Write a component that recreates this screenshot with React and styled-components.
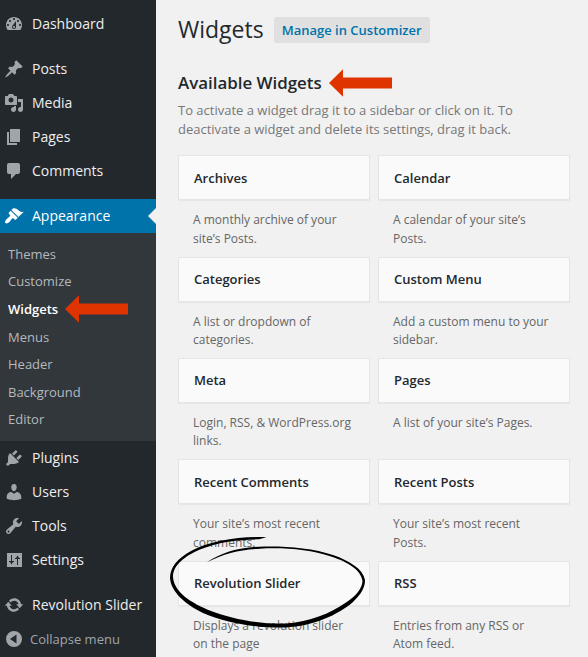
import React from "react";
import styled, { createGlobalStyle, css } from "styled-components";

const Global = createGlobalStyle`
  * { box-sizing: border-box; }
  body {
    margin: 0;
    background: #f1f1f1;
    font-family: "Open Sans", sans-serif;
    overflow: hidden;
  }
  h1, h2, h3, p { margin: 0; }
`;

const Page = styled.div`
  display: flex;
  width: 588px;
  height: 657px;
  overflow: hidden;
`;

const Sidebar = styled.nav`
  flex: none;
  width: 156px;
  padding-top: 7px;
  background: #23282d;
`;

const MenuItem = styled.a`
  position: relative;
  display: flex;
  align-items: center;
  gap: 8px;
  height: 34px;
  padding-left: 4px;
  margin-top: ${(p) => (p.$gap ? "11px" : "0")};
  font-size: 14px;
  line-height: 18px;
  white-space: nowrap;
  color: #eee;
  ${(p) =>
    p.$active &&
    css`
      background: #0073aa;
      color: #fff;
      &::after {
        content: "";
        position: absolute;
        right: 0;
        top: 9px;
        border: 8px solid transparent;
        border-left: 0;
        border-right-color: #f1f1f1;
      }
    `}
`;

const MenuIcon = styled.svg`
  flex: none;
  width: 20px;
  height: 20px;
  fill: ${(p) => (p.$active ? "#fff" : "#a0a5aa")};
  fill-rule: evenodd;
`;

const Submenu = styled.div`
  display: flex;
  flex-direction: column;
  height: 208px;
  padding: 7px 0 8px 8px;
  background: #32373c;
`;

const SubItem = styled.a`
  display: flex;
  align-items: center;
  flex: 1;
  gap: 7px;
  font-size: 13px;
  line-height: 18px;
  color: ${(p) => (p.$current ? "#fff" : "#b4b9be")};
  font-weight: ${(p) => (p.$current ? 600 : 400)};
`;

const Collapse = styled.button`
  display: flex;
  align-items: center;
  gap: 6px;
  height: 34px;
  padding: 0 0 0 4px;
  border: 0;
  background: none;
  font: 13px "Open Sans", sans-serif;
  color: #a0a5aa;
`;

const Main = styled.main`
  flex: 1;
  padding: 12px 18px 0 22px;
`;

const TitleRow = styled.header`
  display: flex;
  align-items: center;
  gap: 10px;
  height: 34px;
`;

const Title = styled.h1`
  font-size: 23px;
  font-weight: 400;
  line-height: 32px;
  color: #23282d;
`;

const CustomizerButton = styled.a`
  margin-top: 2px;
  padding: 0 8px;
  height: 26px;
  line-height: 26px;
  border-radius: 2px;
  background: #e0e0e0;
  color: #0073aa;
  font-size: 13px;
  font-weight: 600;
  white-space: nowrap;
`;

const SectionTitle = styled.div`
  display: flex;
  align-items: center;
  gap: 7px;
  height: 28px;
  margin-top: 23px;
`;

const SectionHeading = styled.h2`
  font-size: 16.9px;
  font-weight: 600;
  line-height: 24px;
  color: #23282d;
`;

const Intro = styled.p`
  margin-top: 4px;
  font-size: 13px;
  line-height: 19px;
  color: #777;
  white-space: nowrap;
`;

const Grid = styled.div`
  display: grid;
  grid-template-columns: 192px 192px;
  column-gap: 8px;
  grid-auto-rows: 101.4px;
  margin-top: 16.2px;
`;

const Widget = styled.section`
  position: relative;
`;

const Card = styled.div`
  display: flex;
  align-items: center;
  height: 45px;
  padding: 0 15px;
  border: 1px solid #e5e5e5;
  background: #fafafa;
  box-shadow: 0 1px 1px rgba(0, 0, 0, 0.04);
`;

const CardTitle = styled.h3`
  font-size: 13px;
  font-weight: 600;
  line-height: 18px;
  color: #23282d;
`;

const Description = styled.p`
  padding: 11px 0 0 15px;
  font-size: 12px;
  line-height: 18.5px;
  color: #666;
  white-space: pre-line;
`;

const Scribble = styled.svg`
  position: absolute;
  left: -12px;
  top: -28px;
  width: 204px;
  height: 100px;
`;

const PointerSvg = styled.svg`
  flex: none;
  width: 63px;
  height: 28px;
  fill: #e03400;
`;

const Pointer = () => (
  <PointerSvg viewBox="0 0 63 28">
    <path d="M0 14 14 .3V8.500H63V19.500H14V27.700Z" />
  </PointerSvg>
);

const icons = {
  dashboard:
    "M3.76 16h12.48c1.1-1.37 1.76-3.11 1.76-5 0-4.42-3.58-8-8-8s-8 3.58-8 8c0 1.89.66 3.63 1.76 5zM10 4c.55 0 1 .45 1 1s-.45 1-1 1-1-.45-1-1 .45-1 1-1zM6 6c.55 0 1 .45 1 1s-.45 1-1 1-1-.45-1-1 .45-1 1-1zm8 0c.55 0 1 .45 1 1s-.45 1-1 1-1-.45-1-1 .45-1 1-1zm-5.370 5.550L12 7v6c0 1.100-.9 2-2 2s-2-.9-2-2c0-.57.24-1.080.63-1.450zM4 10c.55 0 1 .45 1 1s-.45 1-1 1-1-.45-1-1 .45-1 1-1zm12 0c.55 0 1 .45 1 1s-.45 1-1 1-1-.45-1-1 .45-1 1-1zm-5 3c0-.55-.45-1-1-1s-1 .45-1 1 .45 1 1 1 1-.45 1-1z",
  post: "M10.44 3.02l1.820-1.820 6.360 6.350-1.830 1.820c-1.050-.68-2.480-.57-3.410.36l-.75.75c-.92.93-1.040 2.350-.35 3.410l-1.830 1.820-2.410-2.410-2.800 2.790c-.42.42-3.380 2.710-3.800 2.290s1.860-3.390 2.280-3.810l2.790-2.790L4.100 9.360l1.830-1.820c1.050.69 2.480.57 3.400-.36l.75-.75c.93-.92 1.050-2.350.36-3.410z",
  media:
    "M13 11V4c0-.55-.45-1-1-1h-1.670L9 1H5L3.670 3H2c-.55 0-1 .45-1 1v7c0 .55.45 1 1 1h10c.55 0 1-.45 1-1zM7 4.500c1.380 0 2.500 1.120 2.500 2.500S8.380 9.500 7 9.500 4.500 8.380 4.500 7 5.620 4.500 7 4.500zM14 6h5v10.500c0 1.380-1.120 2.500-2.500 2.500S14 17.880 14 16.500s1.120-2.500 2.500-2.500c.17 0 .34.02.5.05V9h-3V6zm-4 8.050V13h2v3.500c0 1.380-1.120 2.500-2.500 2.500S7 17.880 7 16.500 8.120 14 9.500 14c.17 0 .34.02.5.05z",
  page: "M6 15V2h10v13H6zm-1 1h8v2H3V5h2v11z",
  comments:
    "M5 2h9c1.100 0 2 .9 2 2v7c0 1.100-.9 2-2 2h-2l-5 5v-5H5c-1.100 0-2-.9-2-2V4c0-1.100.9-2 2-2z",
  appearance:
    "M14.480 11.060L7.410 3.990l1.500-1.500c.5-.56 2.300-.47 3.510.32 1.210.8 1.430 1.280 2.910 2.100 1.180.64 2.450 1.260 4.450.85zm-.71.71L6.700 4.700 4.930 6.470c-.39.39-.39 1.020 0 1.410l1.060 1.060c.39.39.39 1.030 0 1.420-.6.6-1.430 1.110-2.210 1.690-.35.26-.7.53-1.010.84C1.430 14.230.4 16.080 1.400 17.070c.99 1 2.840-.03 4.180-1.360.31-.31.58-.66.85-1.020.57-.78 1.080-1.610 1.690-2.210.39-.39 1.020-.39 1.410 0l1.060 1.060c.39.39 1.020.39 1.410 0z",
  plugins:
    "M13.110 4.360L9.870 7.600 8 5.730l3.240-3.240c.35-.34 1.050-.2 1.560.32.52.51.66 1.210.31 1.550zm-8 1.770l.91-1.120 9.010 9.010-1.190.84c-.71.71-2.630 1.160-3.820 1.160H6.140L4.900 17.260c-.59.59-1.540.59-2.120 0-.59-.58-.59-1.530 0-2.120l1.240-1.240v-3.880c0-1.130.4-3.190 1.090-3.890zm7.260 3.970l3.240-3.240c.34-.35 1.040-.21 1.550.31.52.51.66 1.210.31 1.550l-3.240 3.250z",
  users:
    "M10 9.250c-2.270 0-2.730-3.440-2.730-3.440C7 4.020 7.820 2 9.970 2c2.160 0 2.980 2.020 2.710 3.810 0 0-.41 3.440-2.680 3.440zm0 2.570L12.720 10c2.390 0 4.520 2.330 4.520 4.530v2.490s-3.650 1.130-7.240 1.130c-3.650 0-7.240-1.130-7.240-1.130v-2.490c0-2.250 1.940-4.480 4.470-4.480z",
  tools:
    "M16.680 9.770c-1.340 1.340-3.300 1.670-4.950.99l-5.410 6.520c-.99.99-2.590.99-3.580 0s-.99-2.590 0-3.570l6.520-5.420c-.68-1.650-.35-3.610.99-4.950 1.280-1.280 3.120-1.620 4.720-1.060l-2.890 2.890 2.820 2.820 2.860-2.870c.53 1.580.18 3.390-1.080 4.650zM3.810 16.210c.4.39 1.040.39 1.430 0 .4-.4.4-1.040 0-1.430-.39-.4-1.030-.4-1.430 0-.39.39-.39 1.030 0 1.430z",
  settings:
    "M3 3H18V17H3ZM7 5V11H5V12H6L7.500 14.500 9 12H10V11H8V5ZM13 15V9H11V8H12L13.500 5.500 15 8H16V9H14V15Z",
  update:
    "M10.200 3.280c3.530 0 6.430 2.610 6.920 6h2.080l-3.500 4-3.500-4h2.320c-.45-1.970-2.210-3.450-4.320-3.450-1.450 0-2.730.71-3.540 1.780L4.950 5.660C6.230 4.200 8.110 3.280 10.200 3.280zm-.4 13.440c-3.520 0-6.430-2.610-6.920-6H.8l3.500-4c1.170 1.330 2.330 2.670 3.500 4H5.480c.45 1.970 2.210 3.450 4.320 3.450 1.450 0 2.730-.71 3.540-1.780l1.710 1.950c-1.280 1.460-3.150 2.380-5.250 2.380z",
  collapse: "M10 2A8 8 0 1 0 10 18A8 8 0 1 0 10 2ZM12.500 5.500V14.500L6 10Z",
};

const Icon = ({ name, active }) => (
  <MenuIcon viewBox="0 0 20 20" $active={active}>
    <path d={icons[name]} />
  </MenuIcon>
);

const topMenu = [
  ["dashboard", "Dashboard"],
  ["post", "Posts", true],
  ["media", "Media"],
  ["page", "Pages"],
  ["comments", "Comments"],
];
const subMenu = ["Themes", "Customize", "Widgets", "Menus", "Header", "Background", "Editor"];
const bottomMenu = [
  ["plugins", "Plugins"],
  ["users", "Users"],
  ["tools", "Tools"],
  ["settings", "Settings"],
  ["update", "Revolution Slider", true],
];

const widgets = [
  ["Archives", "A monthly archive of your\nsite’s Posts."],
  ["Calendar", "A calendar of your site’s\nPosts."],
  ["Categories", "A list or dropdown of\ncategories."],
  ["Custom Menu", "Add a custom menu to your\nsidebar."],
  ["Meta", "Login, RSS, & WordPress.org\nlinks."],
  ["Pages", "A list of your site’s Pages."],
  ["Recent Comments", "Your site’s most recent\ncomments."],
  ["Recent Posts", "Your site’s most recent\nPosts."],
  ["Revolution Slider", "Displays a revolution slider\non the page", true],
  ["RSS", "Entries from any RSS or\nAtom feed."],
];

const MenuGroup = ({ items }) =>
  items.map(([icon, label, gap]) => (
    <MenuItem key={label} $gap={gap}>
      <Icon name={icon} />
      {label}
    </MenuItem>
  ));

const HandDrawnCircle = () => (
  <Scribble viewBox="166 533 204 100">
    <path d="M266.500 537.300C240 536 210 541 191 551C178 558 170 567 170 578C171 592 185 604 203 613C228 624 258 628 286 627.500C313 626 338 615 353 602C361 594 365 588 365 580C363 569 350 561 333 555C313 548 286 546 264 546.500C241 547 222 552 207 562.300C224 553.500 240 549.500 260 548.700C285 547.500 310 549.500 331 556.500C348 562 361 570 362.500 581C362 589 356 596 346 602.500C330 614 309 621.500 287 623.500C260 624.500 232 619 211 611C191 603 174 592 173 577C173 565 185 556 200 549.500C220 541 240 539.800 259 539.300Z" />
  </Scribble>
);

export default function App() {
  return (
    <>
      <Global />
      <Page>
        <Sidebar>
          <MenuGroup items={topMenu} />
          <MenuItem $gap $active>
            <Icon name="appearance" active />
            Appearance
          </MenuItem>
          <Submenu>
            {subMenu.map((label) => (
              <SubItem key={label} $current={label === "Widgets"}>
                {label}
                {label === "Widgets" && <Pointer />}
              </SubItem>
            ))}
          </Submenu>
          <MenuGroup items={bottomMenu} />
          <Collapse>
            <Icon name="collapse" />
            Collapse menu
          </Collapse>
        </Sidebar>
        <Main>
          <TitleRow>
            <Title>Widgets</Title>
            <CustomizerButton>Manage in Customizer</CustomizerButton>
          </TitleRow>
          <SectionTitle>
            <SectionHeading>Available Widgets</SectionHeading>
            <Pointer />
          </SectionTitle>
          <Intro>
            To activate a widget drag it to a sidebar or click on it. To
            <br />
            deactivate a widget and delete its settings, drag it back.
          </Intro>
          <Grid>
            {widgets.map(([title, text, circled]) => (
              <Widget key={title}>
                <Card>
                  <CardTitle>{title}</CardTitle>
                </Card>
                <Description>{text}</Description>
                {circled && <HandDrawnCircle />}
              </Widget>
            ))}
          </Grid>
        </Main>
      </Page>
    </>
  );
}
